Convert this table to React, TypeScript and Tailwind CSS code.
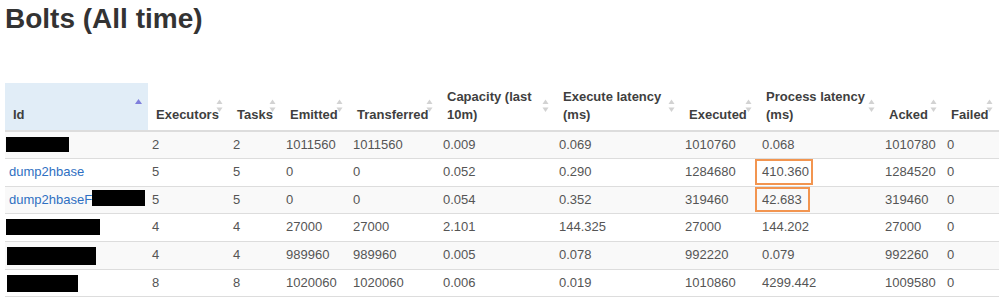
type Cell = { link: string; redact?: number } | { redact: number; h: number; dx?: number };

const headers: { label: string; width: number; sort: "asc" | "both" }[] = [
  { label: "Id", width: 143, sort: "asc" },
  { label: "Executors", width: 81, sort: "both" },
  { label: "Tasks", width: 53, sort: "both" },
  { label: "Emitted", width: 67, sort: "both" },
  { label: "Transferred", width: 90, sort: "both" },
  { label: "Capacity (last 10m)", width: 116, sort: "both" },
  { label: "Execute latency (ms)", width: 126, sort: "both" },
  { label: "Executed", width: 77, sort: "both" },
  { label: "Process latency (ms)", width: 123, sort: "both" },
  { label: "Acked", width: 62, sort: "both" },
  { label: "Failed", width: 56, sort: "both" },
];

const rows: { id: Cell; values: string[]; flag?: boolean }[] = [
  { id: { redact: 63, h: 15 }, values: ["2", "2", "1011560", "1011560", "0.009", "0.069", "1010760", "0.068", "1010780", "0"] },
  { id: { link: "dump2hbase" }, values: ["5", "5", "0", "0", "0.052", "0.290", "1284680", "410.360", "1284520", "0"], flag: true },
  { id: { link: "dump2hbaseF", redact: 53 }, values: ["5", "5", "0", "0", "0.054", "0.352", "319460", "42.683", "319460", "0"], flag: true },
  { id: { redact: 94, h: 16 }, values: ["4", "4", "27000", "27000", "2.101", "144.325", "27000", "144.202", "27000", "0"] },
  { id: { redact: 89, h: 18, dx: 1 }, values: ["4", "4", "989960", "989960", "0.005", "0.078", "992220", "0.079", "992260", "0"] },
  { id: { redact: 71, h: 17, dx: 1 }, values: ["8", "8", "1020060", "1020060", "0.006", "0.019", "1010860", "4299.442", "1009580", "0"] },
];

function SortIcon({ sort }: { sort: "asc" | "both" }) {
  return (
    <svg
      width="7"
      height="14"
      viewBox="0 0 7 14"
      className="absolute right-[6px] top-1/2 -translate-y-1/2"
    >
      {sort === "asc" ? (
        <polygon points="0,5 3.5,0 7,5" fill="#7f7fdc" />
      ) : (
        <>
          <polygon points="0.5,5 3.5,0.5 6.5,5" fill="#d2d2d2" />
          <polygon points="0.5,8.5 3.5,13 6.5,8.5" fill="#d2d2d2" />
        </>
      )}
    </svg>
  );
}

function IdCell({ id }: { id: Cell }) {
  if ("link" in id) {
    return (
      <span className="whitespace-nowrap">
        <a className="text-[#2f70c2]">{id.link}</a>
        {id.redact && <span className="inline-block align-top mt-[-1px] h-[16px] bg-black" style={{ width: id.redact }} />}
      </span>
    );
  }
  return (
    <span
      className="inline-block align-top mt-[1px] bg-black"
      style={{ width: id.redact, height: id.h, marginLeft: (id.dx ?? 0) - 3 }}
    />
  );
}

export default function App() {
  return (
    <div className="w-[999px] h-[299px] overflow-hidden bg-white pl-[5px] font-['Liberation_Sans',Arial,sans-serif]">
      <h2 className="mt-[4px] text-[28px] leading-[1.1] font-bold text-[#333]">Bolts (All time)</h2>
      <table className="mt-[48px] w-[994px] table-fixed text-[13px] leading-[18.5px] text-[#555]">
        <colgroup>
          {headers.map((h) => (
            <col key={h.label} style={{ width: h.width }} />
          ))}
        </colgroup>
        <thead>
          <tr>
            {headers.map((h, i) => (
              <th
                key={h.label}
                className={`relative text-left align-bottom font-bold text-[#3f3f3f] pl-[8px] pr-[4px] pt-[5px] pb-[5px] border-b-2 border-[#ddd] ${
                  i === 0 ? "bg-[#e1edf7]" : ""
                }`}
              >
                {h.label}
                <SortIcon sort={h.sort} />
              </th>
            ))}
          </tr>
        </thead>
        <tbody>
          {rows.map((r, ri) => (
            <tr key={ri} className={ri % 2 === 0 ? "bg-[#f9f9f9]" : "bg-white"}>
              <td className="border-t border-[#ddd] pl-[4px] py-[4px]">
                <IdCell id={r.id} />
              </td>
              {r.values.map((v, vi) => (
                <td key={vi} className="border-t border-[#ddd] pl-[4px] py-[4px] whitespace-nowrap">
                  {r.flag && vi === 7 ? (
                    <span className="relative inline-block">
                      {v}
                      <span
                        className={`absolute top-[-4px] bottom-[-3px] left-[-7px] border-2 border-[#f29550] ${
                          ri === 1 ? "right-[-4px]" : "right-[-8px]"
                        }`}
                      />
                    </span>
                  ) : (
                    v
                  )}
                </td>
              ))}
            </tr>
          ))}
          <tr>
            <td colSpan={11} className="border-t border-[#ddd] h-[8px]" />
          </tr>
        </tbody>
      </table>
    </div>
  );
}
